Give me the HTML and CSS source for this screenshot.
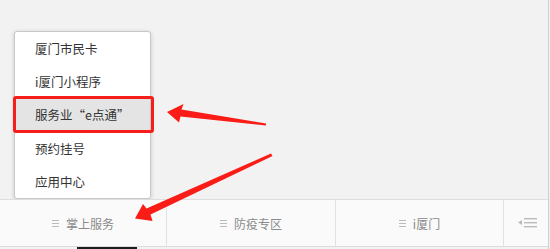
FILE: index.html
```html
<!DOCTYPE html>
<html>
<head>
<meta charset="utf-8">
<link rel="stylesheet" href="styles.css">
</head>
<body>
<div class="page">
  <div class="stage">
    <ul class="menu">
      <li class="item">厦门市民卡</li>
      <li class="item">i厦门小程序</li>
      <li class="item active">服务业“e点通”</li>
      <li class="item">预约挂号</li>
      <li class="item">应用中心</li>
    </ul>
  </div>
  <nav class="tabbar">
    <div class="tab"><span class="burger"></span><span>掌上服务</span></div>
    <div class="tab"><span class="burger"></span><span>防疫专区</span></div>
    <div class="tab"><span class="burger"></span><span>i厦门</span></div>
    <div class="tab tab-kb">
      <svg width="20" height="10" viewBox="0 0 20 10">
        <polygon points="0,4.5 4,2 4,7" fill="#bbb"/>
        <rect x="6" y="0" width="13" height="1.4" fill="#bbb"/>
        <rect x="6" y="4" width="13" height="1.4" fill="#bbb"/>
        <rect x="6" y="8" width="13" height="1.4" fill="#bbb"/>
      </svg>
    </div>
  </nav>
  <div class="foot"><span class="foot-block"></span></div>
  <svg class="arrows" width="550" height="249" viewBox="0 0 550 249">
    <polygon fill="#fa1c16" points="167,112 183.5,104 181.5,109.5 266,123.5 266,125.5 180.5,116.5 179,122.5"/>
    <polygon fill="#fa1c16" points="135,218.5 143,204 146.5,208.5 271,153.5 272.5,156 150.5,214.5 152.5,221"/>
  </svg>
</div>
</body>
</html>
```
FILE: styles.css
```css
* { box-sizing: border-box; }
html, body { margin: 0; padding: 0; }
body {
  width: 550px;
  height: 249px;
  overflow: hidden;
  background: #f2f2f2;
  font-family: "Noto Sans CJK SC", "Noto Sans", sans-serif;
}
.page {
  position: relative;
  width: 549px;
  height: 249px;
  border-right: 1px solid #cfcfcf;
  display: flex;
  flex-direction: column;
}
.stage {
  height: 199px;
  padding: 31px 0 0 14px;
}
.menu {
  list-style: none;
  margin: 0;
  padding: 0;
  width: 137px;
  background: #fff;
  border: 1px solid #c8c8c8;
  border-radius: 3px;
  box-shadow: 0 1px 4px rgba(0,0,0,0.18);
}
.item {
  position: relative;
  height: 33.2px;
  display: flex;
  align-items: center;
  padding-left: 20px;
  font-size: 12.5px;
  color: #333;
}
.item.active {
  background: #e4e4e4;
}
.item.active::after {
  content: "";
  position: absolute;
  left: -2px;
  right: -4px;
  top: -2px;
  bottom: -1px;
  border: 3px solid #f51e1a;
  border-radius: 3px;
}
.tabbar {
  height: 48px;
  background: #fafafa;
  border-top: 1px solid #dedede;
  border-bottom: 1px solid #dcdcdc;
  display: grid;
  grid-template-columns: 167px 169px 168px 1fr;
}
.tab {
  display: flex;
  align-items: center;
  justify-content: center;
  gap: 7px;
  font-size: 12px;
  color: #8a8a8a;
  border-right: 1px solid #e2e2e2;
}
.tab:last-child { border-right: none; }
.burger {
  width: 7px;
  height: 7px;
  background: linear-gradient(#bbb 0 1px, transparent 1px 3px, #bbb 3px 4px, transparent 4px 6px, #bbb 6px 7px);
}
.tab-kb { padding-left: 4px; }
.foot {
  flex: 1;
  padding-left: 77px;
}
.foot-block {
  display: block;
  width: 60px;
  height: 100%;
  background: #1e1e1e;
}
.arrows {
  position: absolute;
  left: 0;
  top: 0;
  pointer-events: none;
}
```
